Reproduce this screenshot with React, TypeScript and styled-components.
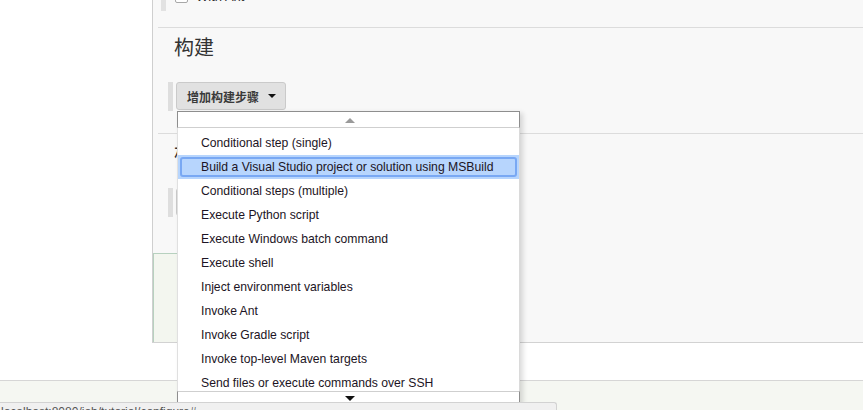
import styled, { createGlobalStyle } from "styled-components";

const Global = createGlobalStyle`
  html, body {
    margin: 0;
    padding: 0;
    background: #fff;
    font-family: "Liberation Sans", "Noto Sans CJK SC", Arial, sans-serif;
    color: #333;
    overflow: hidden;
  }
`;

const Page = styled.div`
  width: 863px;
  height: 410px;
  display: flex;
  flex-direction: column;
  overflow: hidden;
  position: relative;
`;

const Main = styled.div`
  display: flex;
  height: 343px;
`;

const Gutter = styled.div`
  width: 152px;
  flex: none;
  background: #fff;
`;

const Panel = styled.div`
  flex: 1;
  position: relative;
  box-sizing: border-box;
  height: 343px;
  background: #f8f8f8;
  border-left: 1px solid #cfcfcf;
  border-bottom: 1px solid #d2d2d2;
  display: flex;
  flex-direction: column;
`;

const TopRow = styled.div`
  height: 27px;
  display: flex;
  align-items: flex-start;
  padding-left: 8px;
  overflow: hidden;
`;

const SideBar = styled.div<{ $h: number }>`
  width: 5px;
  height: ${(p) => p.$h}px;
  background: #e2e2e2;
  flex: none;
`;

const CheckLine = styled.label`
  display: flex;
  align-items: center;
  gap: 8px;
  margin-top: -10px;
  margin-left: 9px;
  font-size: 13px;
  color: #333;
  height: 13px;
`;

const Check = styled.span`
  width: 11px;
  height: 11px;
  border: 1px solid #a8a8a8;
  background: #fff;
  border-radius: 2px;
`;

const Divider = styled.div<{ $top: number }>`
  margin-top: ${(p) => p.$top}px;
  margin-left: 5px;
  border-top: 1px solid #dcdcdc;
  height: 0;
`;

const Heading = styled.h2`
  margin: 7px 0 0 21px;
  font-size: 20px;
  font-weight: normal;
  line-height: 24px;
  height: 24px;
  color: #333;
  font-family: "Noto Sans CJK SC", "Liberation Sans", sans-serif;
`;

const StepRow = styled.div<{ $top: number }>`
  margin-top: ${(p) => p.$top}px;
  padding-left: 15px;
  display: flex;
  align-items: flex-start;
  gap: 3px;
`;

const StepBar = styled.div`
  width: 5px;
  height: 29px;
  background: #dedede;
`;

const AddButton = styled.button<{ $w?: number }>`
  height: 28px;
  ${(p) => (p.$w ? `width: ${p.$w}px;` : "")}
  box-sizing: border-box;
  padding: 0 9px 0 10px;
  display: flex;
  align-items: center;
  gap: 9px;
  background: #e1e1e1;
  border: 1px solid #cacaca;
  border-radius: 3px;
  font-family: "Noto Sans CJK SC", "Liberation Sans", sans-serif;
  font-size: 12px;
  font-weight: bold;
  color: #3a3a3a;
  cursor: pointer;
`;

const Caret = styled.span`
  width: 0;
  height: 0;
  border-left: 4px solid transparent;
  border-right: 4px solid transparent;
  border-top: 4px solid #111;
`;

const SaveBar = styled.div`
  margin-top: 36px;
  flex: 1;
  width: 230px;
  box-sizing: border-box;
  border: 1px solid #b7d1bf;
  border-bottom: none;
  background: #f3f6ef;
`;

const Dropdown = styled.div`
  position: absolute;
  left: 24px;
  top: 111px;
  width: 343px;
  z-index: 10;
  display: flex;
  flex-direction: column;
  box-shadow: 3px 2px 5px rgba(0, 0, 0, 0.14);
`;

const ScrollArrow = styled.div<{ $down?: boolean }>`
  box-sizing: border-box;
  height: ${(p) => (p.$down ? 13 : 17)}px;
  background: #fff;
  border-left: 1px solid #8e8e8e;
  border-right: 1px solid #8e8e8e;
  ${(p) =>
    p.$down
      ? "border-top: 1px solid #cfcfcf;"
      : "border-top: 1px solid #8e8e8e; border-bottom: 1px solid #cfcfcf;"}
  display: flex;
  justify-content: center;
  align-items: ${(p) => (p.$down ? "flex-start" : "center")};
  padding-top: ${(p) => (p.$down ? 4 : 1)}px;
  padding-left: 2px;
`;

const Triangle = styled.span<{ $down?: boolean }>`
  width: 0;
  height: 0;
  border-left: 5px solid transparent;
  border-right: 5px solid transparent;
  ${(p) =>
    p.$down
      ? "border-top: 5px solid #111;"
      : "border-bottom: 5px solid #9a9a9a;"}
`;

const List = styled.ul`
  list-style: none;
  margin: 0;
  padding: 3px 0 0;
  height: 263px;
  box-sizing: border-box;
  overflow: hidden;
  background: #fff;
  border-left: 1px solid #e0e0e0;
  border-right: 1px solid #dadada;
`;

const Item = styled.li<{ $active?: boolean }>`
  height: 24px;
  box-sizing: border-box;
  padding: 2px 2px;
  background: ${(p) => (p.$active ? "#b7d5fd" : "transparent")};
`;

const ItemLabel = styled.div<{ $active?: boolean }>`
  height: 20px;
  box-sizing: border-box;
  border: 2px solid ${(p) => (p.$active ? "#79a8f3" : "transparent")};
  border-radius: 3px;
  padding-left: 19px;
  line-height: 16px;
  font-size: 12.2px;
  color: #1c1424;
  white-space: nowrap;
`;

const Spacer = styled.div`
  height: 37px;
  flex: none;
`;

const Footer = styled.div`
  flex: 1;
  border-top: 1px solid #d6d6d6;
  background: #f5f7f2;
`;

const StatusBar = styled.div`
  position: absolute;
  left: 0;
  bottom: 0;
  width: 557px;
  height: 8px;
  box-sizing: border-box;
  background: #f0f0f0;
  border-top: 1px solid #d2d2d2;
  border-right: 1px solid #d2d2d2;
  border-top-right-radius: 3px;
  overflow: hidden;
  z-index: 20;
  font-size: 12px;
  color: #555;
  padding: 2px 0 0 1px;
  line-height: 14px;
  white-space: nowrap;
`;

const steps = [
  "Conditional step (single)",
  "Build a Visual Studio project or solution using MSBuild",
  "Conditional steps (multiple)",
  "Execute Python script",
  "Execute Windows batch command",
  "Execute shell",
  "Inject environment variables",
  "Invoke Ant",
  "Invoke Gradle script",
  "Invoke top-level Maven targets",
  "Send files or execute commands over SSH",
];

export default function App() {
  return (
    <Page>
      <Global />
      <Main>
        <Gutter />
        <Panel>
          <TopRow>
            <SideBar $h={11} />
            <CheckLine>
              <Check />
              With Ant
            </CheckLine>
          </TopRow>
          <Divider $top={0} />
          <Heading>构建</Heading>
          <StepRow $top={23}>
            <StepBar />
            <AddButton>
              增加构建步骤
              <Caret />
            </AddButton>
          </StepRow>
          <Divider $top={22} />
          <Heading>构</Heading>
          <StepRow $top={23}>
            <StepBar />
            <AddButton $w={150} />
          </StepRow>
          <SaveBar />

          <Dropdown>
            <ScrollArrow>
              <Triangle />
            </ScrollArrow>
            <List>
              {steps.map((s, i) => (
                <Item key={s} $active={i === 1}>
                  <ItemLabel $active={i === 1}>{s}</ItemLabel>
                </Item>
              ))}
            </List>
            <ScrollArrow $down>
              <Triangle $down />
            </ScrollArrow>
          </Dropdown>
        </Panel>
      </Main>
      <Spacer />
      <Footer />
      <StatusBar>localhost:8080/job/tutorial/configure#</StatusBar>
    </Page>
  );
}
